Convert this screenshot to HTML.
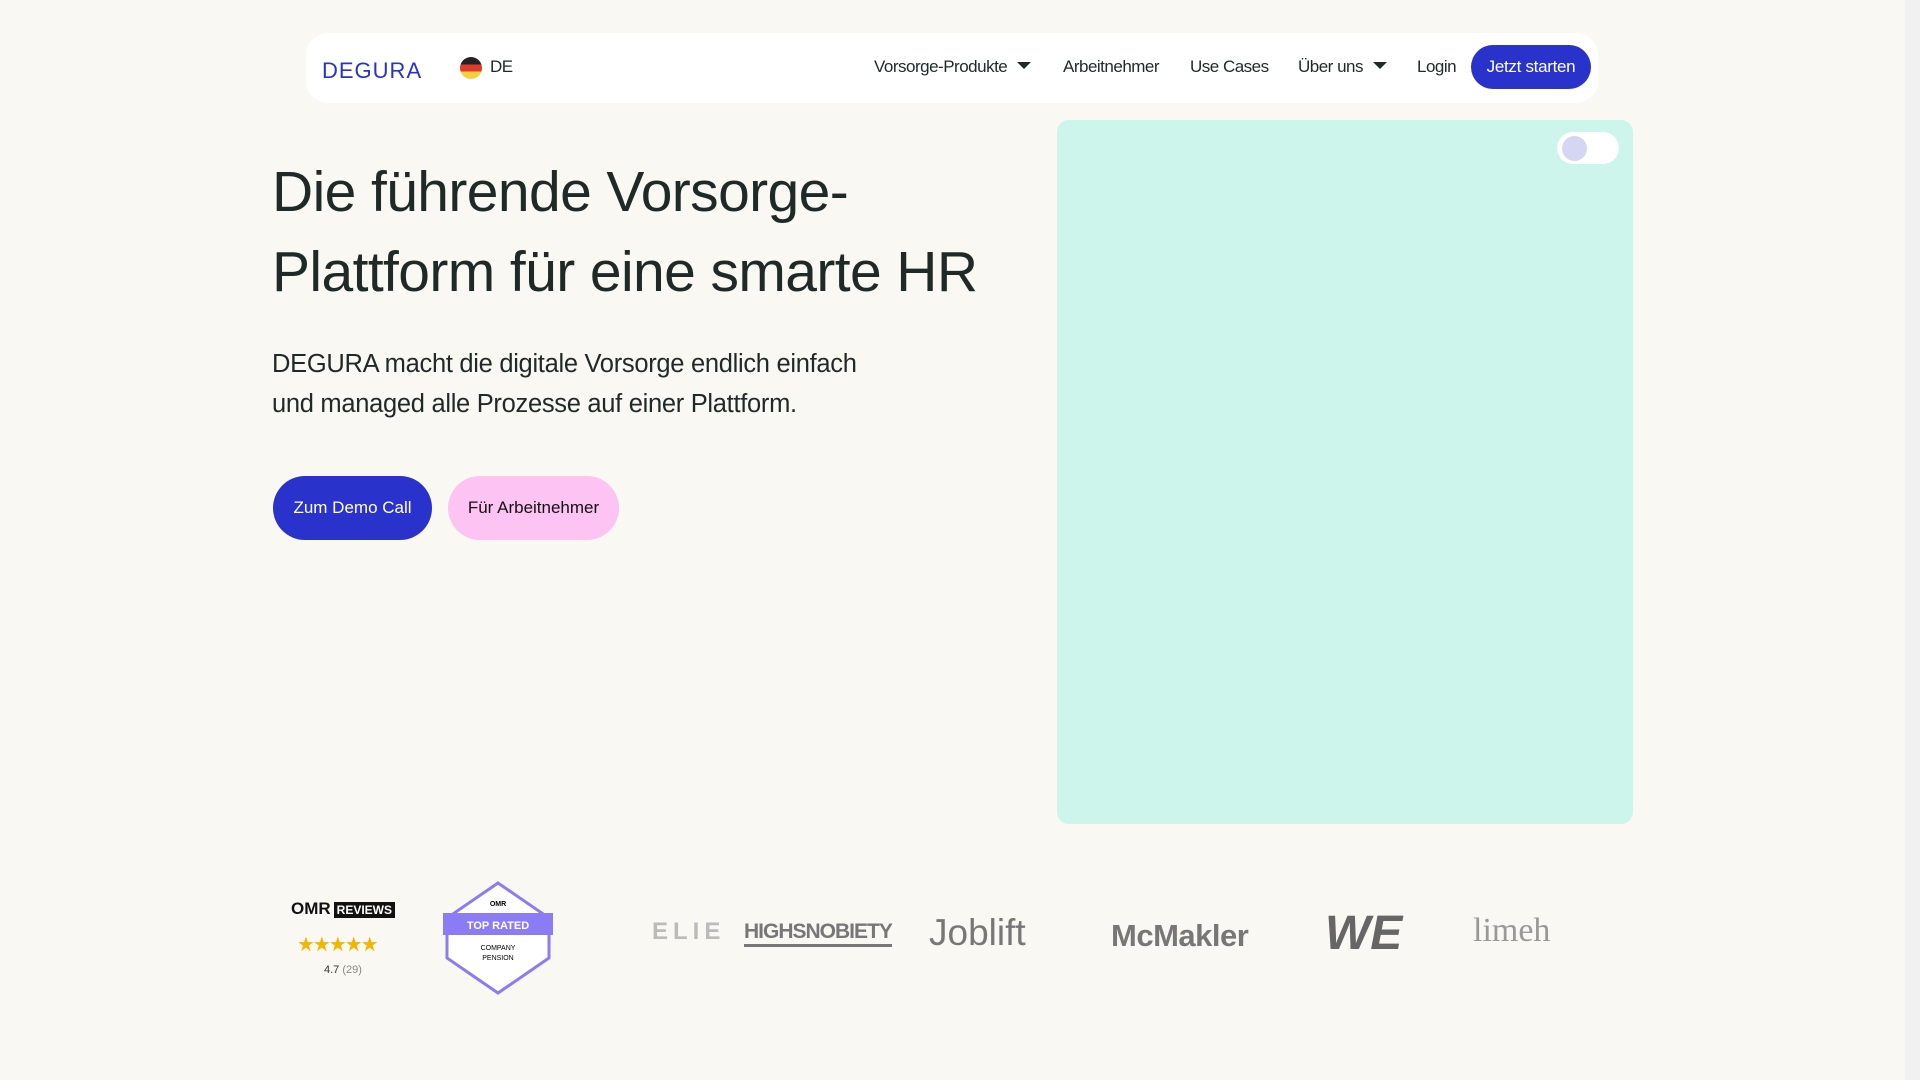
<!DOCTYPE html>
<html><head><meta charset="utf-8"><style>
*{margin:0;padding:0;box-sizing:border-box}
body{width:1920px;height:1080px;background:#faf8f2;font-family:"Liberation Sans",sans-serif;color:#1f2a28;position:relative;overflow:hidden}
.a{position:absolute}
nav{position:absolute;left:306px;top:33px;width:1292px;height:70px;background:#fff;border-radius:22px}
.nl{position:absolute;top:24px;font-size:17px;color:#1f2a28;letter-spacing:-0.5px}
.tri{display:inline-block;width:0;height:0;border-left:7px solid transparent;border-right:7px solid transparent;border-top:7px solid #1f2a28;margin-left:10px;vertical-align:3px}
h1{position:absolute;left:272px;top:152px;font-weight:400;font-size:57px;line-height:80px;color:#1f2a28;letter-spacing:-0.6px}
p.s{position:absolute;left:272px;top:344px;font-size:25.5px;line-height:40px;color:#1f2a28;letter-spacing:-0.3px}
.btn{position:absolute;top:476px;height:64px;border-radius:32px;font-size:17px;display:flex;align-items:center;justify-content:center}
.logo{position:absolute;top:918px;font-weight:700;color:#777}
</style></head><body>
<nav>
<div class="a" style="left:16px;top:25px;font-size:22px;color:#2a32cc;letter-spacing:1px;font-weight:300">DEGURA</div>
<div class="a" style="left:154px;top:24px;width:22px;height:22px;border-radius:50%;background:linear-gradient(#222 0 33%,#e03a2e 33% 66%,#f4d03f 66%)"></div>
<div class="nl" style="left:184px">DE</div>
<div class="nl" style="left:568px">Vorsorge-Produkte<span class="tri"></span></div>
<div class="nl" style="left:757px">Arbeitnehmer</div>
<div class="nl" style="left:884px">Use Cases</div>
<div class="nl" style="left:992px">Über uns<span class="tri"></span></div>
<div class="nl" style="left:1111px">Login</div>
<div class="a" style="left:1165px;top:12px;width:120px;height:44px;border-radius:22px;background:#2a32cc;color:#fff;font-size:17px;letter-spacing:-0.3px;display:flex;align-items:center;justify-content:center">Jetzt starten</div>
</nav>
<h1>Die führende Vorsorge-<br>Plattform für eine smarte HR</h1>
<p class="s">DEGURA macht die digitale Vorsorge endlich einfach<br>und managed alle Prozesse auf einer Plattform.</p>
<div class="btn" style="left:273px;width:159px;background:#2a32cc;color:#fff">Zum Demo Call</div>
<div class="btn" style="left:448px;width:171px;background:#fdc3f3;color:#111">Für Arbeitnehmer</div>
<div class="a" style="left:1057px;top:120px;width:576px;height:704px;background:#cdf5ec;border-radius:12px"></div>
<div class="a" style="left:1557px;top:132px;width:62px;height:32px;border-radius:16px;background:#fff"></div>
<div class="a" style="left:1562px;top:136px;width:25px;height:25px;border-radius:50%;background:#d4d6f4"></div>
<div class="a" style="left:1905px;top:0;width:15px;height:1080px;background:#f1f1f1"></div>
<div class="a" style="left:291px;top:899px;font-weight:700;font-size:17px;color:#111">OMR<span style="background:#111;color:#fff;font-size:12px;padding:1px 3px;margin-left:3px">REVIEWS</span></div>
<div class="a" style="left:297px;top:932px;color:#f2b500;font-size:20px;letter-spacing:-2px">★★★★★</div>
<div class="a" style="left:324px;top:964px;font-size:11px;color:#333">4.7 <span style="color:#888">(29)</span></div>
<svg class="a" style="left:441px;top:880px" width="114" height="116"><polygon points="57,3 108,38 108,78 57,113 6,78 6,38" fill="#fff" stroke="#8b7cf5" stroke-width="3"/><rect x="2" y="33" width="110" height="22" fill="#8b7cf5"/><text x="57" y="49" text-anchor="middle" fill="#fff" font-size="11" font-family="Liberation Sans" font-weight="700">TOP RATED</text><text x="57" y="70" text-anchor="middle" font-size="7" font-family="Liberation Sans">COMPANY</text><text x="57" y="80" text-anchor="middle" font-size="7" font-family="Liberation Sans">PENSION</text><text x="57" y="26" text-anchor="middle" font-size="7" font-family="Liberation Sans" font-weight="700">OMR</text></svg>
<div class="logo" style="left:652px;font-size:24px;letter-spacing:5px;color:#bbb">ELIE</div>
<div class="logo" style="left:744px;top:920px;font-size:21px;letter-spacing:-1px;border-bottom:3px solid #777">HIGHSNOBIETY</div>
<div class="logo" style="left:929px;top:912px;font-size:37px;font-weight:400">Joblift</div>
<div class="logo" style="left:1111px;font-size:31px;letter-spacing:-0.5px">McMakler</div>
<div class="logo" style="left:1325px;top:906px;font-size:48px;color:#666;font-style:italic">WE</div>
<div class="logo" style="left:1473px;top:912px;font-size:34px;font-family:'Liberation Serif',serif;font-weight:400;color:#999">limeh</div>
</body></html>
